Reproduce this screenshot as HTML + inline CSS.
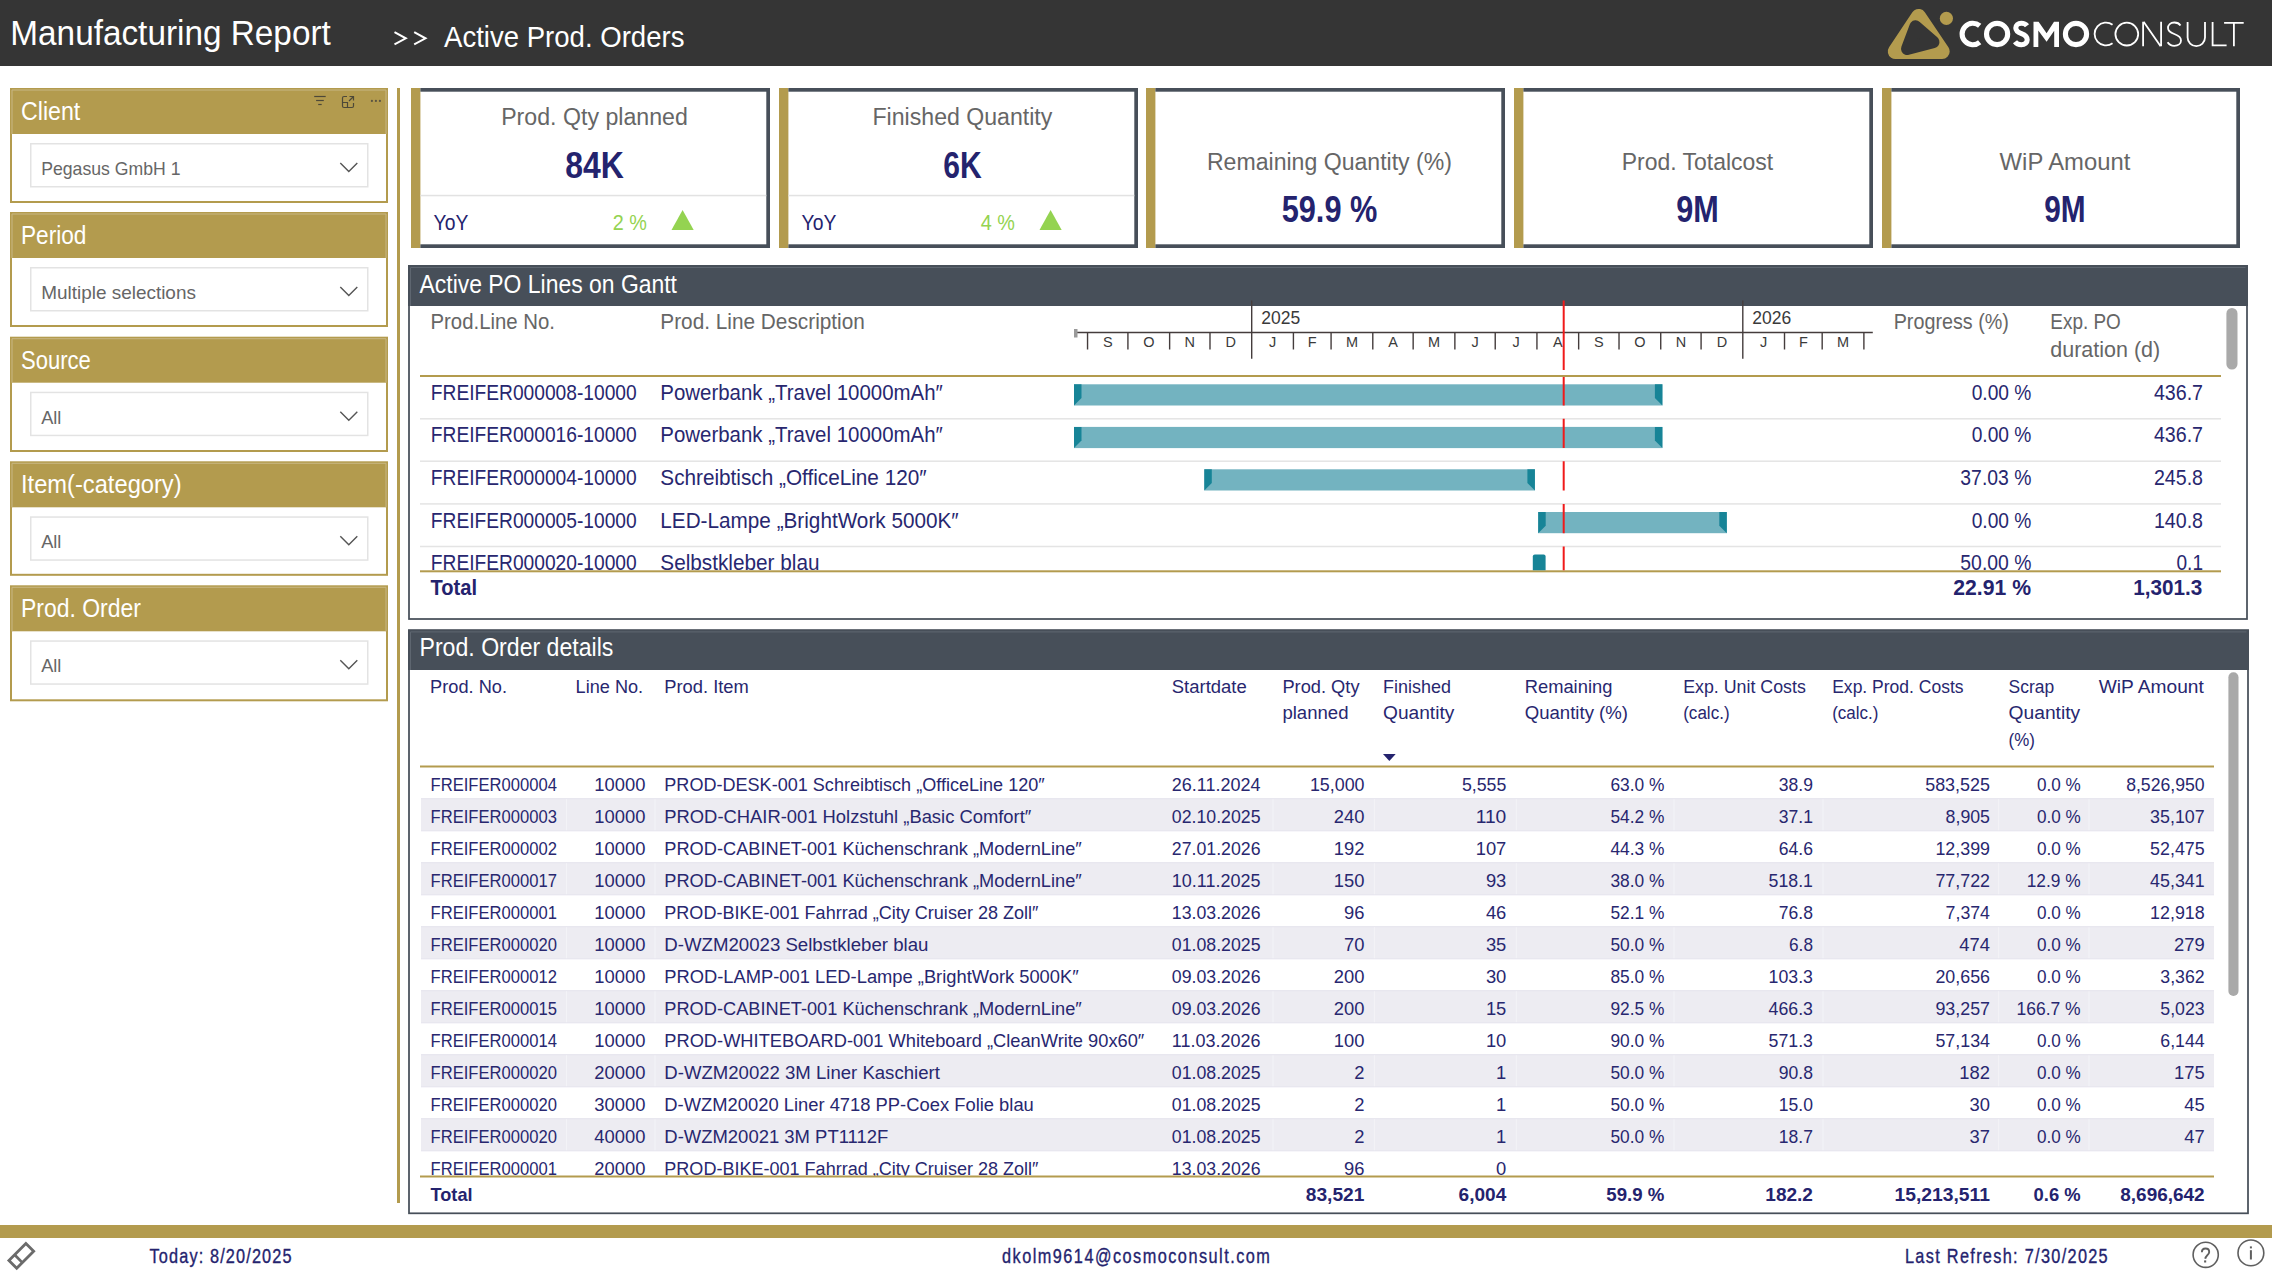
<!DOCTYPE html>
<html><head><meta charset="utf-8"><title>Manufacturing Report</title>
<style>html,body{margin:0;padding:0;background:#fff;overflow:hidden}svg{display:block}text{font-family:"Liberation Sans",sans-serif}</style></head>
<body><svg width="2272" height="1274" viewBox="0 0 2272 1274">
<rect width="2272" height="1274" fill="#FFFFFF"/>
<rect x="0" y="0" width="2272.00" height="66.00" fill="#353535" />
<text transform="translate(10.30,45.30) scale(0.9666,1)" font-size="34.49" font-weight="normal" fill="#FFFFFF" >Manufacturing Report</text>
<polyline points="394.5,32.2 405.8,38.3 394.5,44.4" fill="none" stroke="#FFFFFF" stroke-width="2"/>
<polyline points="414.2,32.2 425.5,38.3 414.2,44.4" fill="none" stroke="#FFFFFF" stroke-width="2"/>
<text transform="translate(444.00,47.30) scale(0.9188,1)" font-size="30.00" font-weight="normal" fill="#FFFFFF" >Active Prod. Orders</text>
<g>
<polygon points="1918.6,16.4 1895.3,51.4 1942.2,51.4" fill="#B39B4E" stroke="#B39B4E" stroke-width="15" stroke-linejoin="round"/>
<polygon points="1915.6,26.6 1907.3,48.8 1933.2,42" fill="#353535" stroke="#353535" stroke-width="12.5" stroke-linejoin="round"/>
<circle cx="1946.4" cy="18.4" r="6.6" fill="#B39B4E"/>
</g>
<g fill="none" stroke="#FFFFFF" stroke-width="5.1">
<path d="M1979.68,25.8 A10.7,10.7 0 1 0 1979.68,42.2"/>
<circle cx="1997.1" cy="34" r="10.6"/>
<path d="M2027,25.8 C2025.5,23.8 2023.5,23.3 2021.3,23.3 C2018,23.3 2015.8,25.3 2015.8,28 C2015.8,31.2 2018.5,32.5 2021.5,33.6 C2024.8,34.8 2027.2,36.5 2027.2,39.8 C2027.2,42.8 2024.8,44.8 2021.3,44.8 C2018.8,44.8 2016.5,43.8 2015,41.8"/>

<circle cx="2076" cy="34" r="10.6"/>
</g>
<polygon fill="#FFFFFF" points="2033.5,47 2033.5,21.8 2038.6,21.8 2046.6,33.2 2054,21.8 2059,21.8 2059,47 2054.2,47 2054.2,30.8 2046.6,41.8 2038.3,30.5 2038.3,47"/>
<g fill="none" stroke="#FFFFFF" stroke-width="1.8">
<path d="M2112.54,24.66 A11.4,11.4 0 1 0 2112.54,43.34"/>
<circle cx="2126.8" cy="34.1" r="11.4"/>
<path d="M2143.1,46.2 L2143.1,21.8 M2143.6,21.8 L2160.6,46.2 M2161.1,46.2 L2161.1,21.8" stroke-linejoin="bevel"/>
<path d="M2180.5,25.5 C2179,23 2176.5,22.5 2174.3,22.5 C2170.5,22.5 2168,24.8 2168,28 C2168,31.5 2171,32.8 2174.3,34 C2178,35.3 2181,37 2181,40.5 C2181,43.8 2178.2,45.8 2174.3,45.8 C2171.5,45.8 2169,44.5 2167.6,42.3"/>
<path d="M2187.6,22 L2187.6,37.5 A8.7,8.7 0 0 0 2205,37.5 L2205,22"/>
<polyline points="2212.6,22 2212.6,45.3 2226.6,45.3"/>
<path d="M2224.1,22.9 L2243.7,22.9 M2233.9,22.9 L2233.9,46.2"/>
</g>
<rect x="10" y="88" width="378.00" height="115.00" fill="#B39B4E" />
<rect x="12" y="134" width="374.00" height="67.00" fill="#FFFFFF" />
<path d="M12,134 L12,90 L386,90 L386,134" fill="none" stroke="#C8B783" stroke-width="1"/>
<text transform="translate(21.00,119.80) scale(0.9144,1)" font-size="25.36" font-weight="normal" fill="#FFFFFF" >Client</text>
<rect x="30.75" y="143.75" width="337" height="43" fill="#FFFFFF" stroke="#E3E3E3" stroke-width="1.5"/>
<text transform="translate(41.20,174.80) scale(0.9374,1)" font-size="18.84" font-weight="normal" fill="#666666" >Pegasus GmbH 1</text>
<polyline points="340.3,163 348.8,171.5 357.3,163" fill="none" stroke="#555555" stroke-width="1.4"/>
<rect x="10" y="212" width="378.00" height="115.00" fill="#B39B4E" />
<rect x="12" y="258" width="374.00" height="67.00" fill="#FFFFFF" />
<path d="M12,258 L12,214 L386,214 L386,258" fill="none" stroke="#C8B783" stroke-width="1"/>
<text transform="translate(21.00,243.80) scale(0.8933,1)" font-size="25.36" font-weight="normal" fill="#FFFFFF" >Period</text>
<rect x="30.75" y="267.75" width="337" height="43" fill="#FFFFFF" stroke="#E3E3E3" stroke-width="1.5"/>
<text transform="translate(41.20,298.80) scale(1.0063,1)" font-size="18.84" font-weight="normal" fill="#666666" >Multiple selections</text>
<polyline points="340.3,287 348.8,295.5 357.3,287" fill="none" stroke="#555555" stroke-width="1.4"/>
<rect x="10" y="336.7" width="378.00" height="115.30" fill="#B39B4E" />
<rect x="12" y="382.7" width="374.00" height="67.30" fill="#FFFFFF" />
<path d="M12,382.7 L12,338.7 L386,338.7 L386,382.7" fill="none" stroke="#C8B783" stroke-width="1"/>
<text transform="translate(21.00,368.50) scale(0.8687,1)" font-size="25.36" font-weight="normal" fill="#FFFFFF" >Source</text>
<rect x="30.75" y="392.45" width="337" height="43" fill="#FFFFFF" stroke="#E3E3E3" stroke-width="1.5"/>
<text transform="translate(41.20,423.50) scale(0.9650,1)" font-size="18.84" font-weight="normal" fill="#666666" >All</text>
<polyline points="340.3,411.7 348.8,420.2 357.3,411.7" fill="none" stroke="#555555" stroke-width="1.4"/>
<rect x="10" y="461.3" width="378.00" height="114.50" fill="#B39B4E" />
<rect x="12" y="507.3" width="374.00" height="66.50" fill="#FFFFFF" />
<path d="M12,507.3 L12,463.3 L386,463.3 L386,507.3" fill="none" stroke="#C8B783" stroke-width="1"/>
<text transform="translate(21.00,493.10) scale(0.9347,1)" font-size="25.36" font-weight="normal" fill="#FFFFFF" >Item(-category)</text>
<rect x="30.75" y="517.05" width="337" height="43" fill="#FFFFFF" stroke="#E3E3E3" stroke-width="1.5"/>
<text transform="translate(41.20,548.10) scale(0.9650,1)" font-size="18.84" font-weight="normal" fill="#666666" >All</text>
<polyline points="340.3,536.3 348.8,544.8 357.3,536.3" fill="none" stroke="#555555" stroke-width="1.4"/>
<rect x="10" y="585.3" width="378.00" height="116.00" fill="#B39B4E" />
<rect x="12" y="631.3" width="374.00" height="68.00" fill="#FFFFFF" />
<path d="M12,631.3 L12,587.3 L386,587.3 L386,631.3" fill="none" stroke="#C8B783" stroke-width="1"/>
<text transform="translate(21.00,617.10) scale(0.9057,1)" font-size="25.36" font-weight="normal" fill="#FFFFFF" >Prod. Order</text>
<rect x="30.75" y="641.05" width="337" height="43" fill="#FFFFFF" stroke="#E3E3E3" stroke-width="1.5"/>
<text transform="translate(41.20,672.10) scale(0.9650,1)" font-size="18.84" font-weight="normal" fill="#666666" >All</text>
<polyline points="340.3,660.3 348.8,668.8 357.3,660.3" fill="none" stroke="#555555" stroke-width="1.4"/>
<g stroke="#4d4838" stroke-width="1.2" fill="none"><line x1="314.2" y1="96.5" x2="325.7" y2="96.5"/><line x1="316.1" y1="100.5" x2="323.8" y2="100.5"/><line x1="318.2" y1="104.5" x2="321.7" y2="104.5"/><path d="M347,96.5 L344,96.5 Q342.5,96.5 342.5,98 L342.5,106 Q342.5,107.5 344,107.5 L352,107.5 Q353.5,107.5 353.5,106 L353.5,103"/><path d="M342.5,102.5 L347.5,102.5 L347.5,107.5"/><path d="M349.5,96.5 L353.5,96.5 L353.5,100.5 M353.5,96.5 L349,101"/></g><g fill="#5a5442"><circle cx="371.9" cy="100.9" r="1.1"/><circle cx="375.9" cy="100.9" r="1.1"/><circle cx="379.9" cy="100.9" r="1.1"/></g>
<rect x="397" y="88" width="3.00" height="1115.00" fill="#B39B4E" />
<rect x="411" y="88" width="9.40" height="160.00" fill="#B39B4E" />
<rect x="420.4" y="88" width="349.60" height="3.70" fill="#474F59" />
<rect x="766.3" y="88" width="3.70" height="160.00" fill="#474F59" />
<rect x="420.4" y="244.3" width="349.60" height="3.70" fill="#474F59" />
<text transform="translate(501.15,125.00) scale(0.9401,1)" font-size="24.64" font-weight="normal" fill="#666666" >Prod. Qty planned</text>
<text transform="translate(565.20,178.00) scale(0.8646,1)" font-size="36.96" font-weight="bold" fill="#24236E" >84K</text>
<rect x="420.4" y="194.8" width="345.90" height="1.50" fill="#E2E2E2" />
<text transform="translate(433.60,230.00) scale(0.8883,1)" font-size="21.74" font-weight="normal" fill="#24236E" >YoY</text>
<text transform="translate(612.84,230.00) scale(0.9120,1)" font-size="21.74" font-weight="normal" fill="#94D351" >2 %</text>
<polygon points="671.5,230 693.7,230 682.6,210" fill="#94D351"/>
<rect x="779" y="88" width="9.40" height="160.00" fill="#B39B4E" />
<rect x="788.4" y="88" width="349.60" height="3.70" fill="#474F59" />
<rect x="1134.3" y="88" width="3.70" height="160.00" fill="#474F59" />
<rect x="788.4" y="244.3" width="349.60" height="3.70" fill="#474F59" />
<text transform="translate(872.50,125.00) scale(0.9388,1)" font-size="24.64" font-weight="normal" fill="#666666" >Finished Quantity</text>
<text transform="translate(943.30,178.00) scale(0.8130,1)" font-size="36.96" font-weight="bold" fill="#24236E" >6K</text>
<rect x="788.4" y="194.8" width="345.90" height="1.50" fill="#E2E2E2" />
<text transform="translate(801.60,230.00) scale(0.8883,1)" font-size="21.74" font-weight="normal" fill="#24236E" >YoY</text>
<text transform="translate(980.84,230.00) scale(0.9120,1)" font-size="21.74" font-weight="normal" fill="#94D351" >4 %</text>
<polygon points="1039.5,230 1061.7,230 1050.6,210" fill="#94D351"/>
<rect x="1146" y="88" width="9.40" height="160.00" fill="#B39B4E" />
<rect x="1155.4" y="88" width="349.60" height="3.70" fill="#474F59" />
<rect x="1501.3" y="88" width="3.70" height="160.00" fill="#474F59" />
<rect x="1155.4" y="244.3" width="349.60" height="3.70" fill="#474F59" />
<text transform="translate(1206.95,170.30) scale(0.9483,1)" font-size="24.35" font-weight="normal" fill="#666666" >Remaining Quantity (%)</text>
<text transform="translate(1281.70,222.00) scale(0.8310,1)" font-size="36.96" font-weight="bold" fill="#24236E" >59.9 %</text>
<rect x="1514" y="88" width="9.40" height="160.00" fill="#B39B4E" />
<rect x="1523.4" y="88" width="349.60" height="3.70" fill="#474F59" />
<rect x="1869.3" y="88" width="3.70" height="160.00" fill="#474F59" />
<rect x="1523.4" y="244.3" width="349.60" height="3.70" fill="#474F59" />
<text transform="translate(1621.75,170.30) scale(0.9433,1)" font-size="24.35" font-weight="normal" fill="#666666" >Prod. Totalcost</text>
<text transform="translate(1676.25,222.00) scale(0.8279,1)" font-size="36.96" font-weight="bold" fill="#24236E" >9M</text>
<rect x="1882" y="88" width="9.40" height="160.00" fill="#B39B4E" />
<rect x="1891.4" y="88" width="348.60" height="3.70" fill="#474F59" />
<rect x="2236.3" y="88" width="3.70" height="160.00" fill="#474F59" />
<rect x="1891.4" y="244.3" width="348.60" height="3.70" fill="#474F59" />
<text transform="translate(1999.60,170.30) scale(0.9796,1)" font-size="24.35" font-weight="normal" fill="#666666" >WiP Amount</text>
<text transform="translate(2044.30,222.00) scale(0.8065,1)" font-size="36.96" font-weight="bold" fill="#24236E" >9M</text>
<rect x="409" y="266" width="1838" height="353" fill="#FFFFFF" stroke="#474F59" stroke-width="1.75"/>
<rect x="408" y="265" width="1840.00" height="41.00" fill="#474F59" />
<path d="M410.5,306 L410.5,267.5 L2245.5,267.5" fill="none" stroke="#5E6670" stroke-width="1"/>
<text transform="translate(419.50,292.60) scale(0.9046,1)" font-size="25.36" font-weight="normal" fill="#FFFFFF" >Active PO Lines on Gantt</text>
<text transform="translate(430.50,329.20) scale(0.9122,1)" font-size="22.32" font-weight="normal" fill="#666666" >Prod.Line No.</text>
<text transform="translate(660.30,329.20) scale(0.9318,1)" font-size="22.32" font-weight="normal" fill="#666666" >Prod. Line Description</text>
<text transform="translate(1893.70,328.70) scale(0.8846,1)" font-size="22.32" font-weight="normal" fill="#666666" >Progress (%)</text>
<text transform="translate(2050.30,328.70) scale(0.8482,1)" font-size="22.32" font-weight="normal" fill="#666666" >Exp. PO</text>
<text transform="translate(2050.30,356.60) scale(0.9637,1)" font-size="22.32" font-weight="normal" fill="#666666" >duration (d)</text>
<line x1="1075" y1="332.5" x2="1872.8" y2="332.5" stroke="#443C3C" stroke-width="1.4"/>
<rect x="1074" y="329" width="3.50" height="8.50" fill="#9A9A9A" />
<line x1="1087.55" y1="332.5" x2="1087.55" y2="349.5" stroke="#443C3C" stroke-width="1.4"/>
<text transform="translate(1102.90,346.80) scale(1.0000,1)" font-size="14.49" font-weight="normal" fill="#3A3A3A" >S</text>
<line x1="1127.92" y1="332.5" x2="1127.92" y2="349.5" stroke="#443C3C" stroke-width="1.4"/>
<text transform="translate(1143.13,346.80) scale(1.0000,1)" font-size="14.49" font-weight="normal" fill="#3A3A3A" >O</text>
<line x1="1169.63" y1="332.5" x2="1169.63" y2="349.5" stroke="#443C3C" stroke-width="1.4"/>
<text transform="translate(1184.58,346.80) scale(1.0000,1)" font-size="14.49" font-weight="normal" fill="#3A3A3A" >N</text>
<line x1="1209.99" y1="332.5" x2="1209.99" y2="349.5" stroke="#443C3C" stroke-width="1.4"/>
<text transform="translate(1225.61,346.80) scale(1.0000,1)" font-size="14.49" font-weight="normal" fill="#3A3A3A" >D</text>
<line x1="1251.70" y1="300.5" x2="1251.70" y2="358.8" stroke="#443C3C" stroke-width="1.4"/>
<text transform="translate(1261.20,324.00) scale(0.9303,1)" font-size="18.84" font-weight="normal" fill="#3A3A3A" >2025</text>
<text transform="translate(1268.93,346.80) scale(1.0000,1)" font-size="14.49" font-weight="normal" fill="#3A3A3A" >J</text>
<line x1="1293.41" y1="332.5" x2="1293.41" y2="349.5" stroke="#443C3C" stroke-width="1.4"/>
<text transform="translate(1307.82,346.80) scale(1.0000,1)" font-size="14.49" font-weight="normal" fill="#3A3A3A" >F</text>
<line x1="1331.08" y1="332.5" x2="1331.08" y2="349.5" stroke="#443C3C" stroke-width="1.4"/>
<text transform="translate(1345.90,346.80) scale(1.0000,1)" font-size="14.49" font-weight="normal" fill="#3A3A3A" >M</text>
<line x1="1372.79" y1="332.5" x2="1372.79" y2="349.5" stroke="#443C3C" stroke-width="1.4"/>
<text transform="translate(1388.14,346.80) scale(1.0000,1)" font-size="14.49" font-weight="normal" fill="#3A3A3A" >A</text>
<line x1="1413.16" y1="332.5" x2="1413.16" y2="349.5" stroke="#443C3C" stroke-width="1.4"/>
<text transform="translate(1427.98,346.80) scale(1.0000,1)" font-size="14.49" font-weight="normal" fill="#3A3A3A" >M</text>
<line x1="1454.87" y1="332.5" x2="1454.87" y2="349.5" stroke="#443C3C" stroke-width="1.4"/>
<text transform="translate(1471.43,346.80) scale(1.0000,1)" font-size="14.49" font-weight="normal" fill="#3A3A3A" >J</text>
<line x1="1495.23" y1="332.5" x2="1495.23" y2="349.5" stroke="#443C3C" stroke-width="1.4"/>
<text transform="translate(1512.46,346.80) scale(1.0000,1)" font-size="14.49" font-weight="normal" fill="#3A3A3A" >J</text>
<line x1="1536.94" y1="332.5" x2="1536.94" y2="349.5" stroke="#443C3C" stroke-width="1.4"/>
<text transform="translate(1552.96,346.80) scale(1.0000,1)" font-size="14.49" font-weight="normal" fill="#3A3A3A" >A</text>
<line x1="1578.65" y1="332.5" x2="1578.65" y2="349.5" stroke="#443C3C" stroke-width="1.4"/>
<text transform="translate(1594.00,346.80) scale(1.0000,1)" font-size="14.49" font-weight="normal" fill="#3A3A3A" >S</text>
<line x1="1619.02" y1="332.5" x2="1619.02" y2="349.5" stroke="#443C3C" stroke-width="1.4"/>
<text transform="translate(1634.23,346.80) scale(1.0000,1)" font-size="14.49" font-weight="normal" fill="#3A3A3A" >O</text>
<line x1="1660.73" y1="332.5" x2="1660.73" y2="349.5" stroke="#443C3C" stroke-width="1.4"/>
<text transform="translate(1675.68,346.80) scale(1.0000,1)" font-size="14.49" font-weight="normal" fill="#3A3A3A" >N</text>
<line x1="1701.09" y1="332.5" x2="1701.09" y2="349.5" stroke="#443C3C" stroke-width="1.4"/>
<text transform="translate(1716.71,346.80) scale(1.0000,1)" font-size="14.49" font-weight="normal" fill="#3A3A3A" >D</text>
<line x1="1742.80" y1="300.5" x2="1742.80" y2="358.8" stroke="#443C3C" stroke-width="1.4"/>
<text transform="translate(1752.30,324.00) scale(0.9303,1)" font-size="18.84" font-weight="normal" fill="#3A3A3A" >2026</text>
<text transform="translate(1760.03,346.80) scale(1.0000,1)" font-size="14.49" font-weight="normal" fill="#3A3A3A" >J</text>
<line x1="1784.51" y1="332.5" x2="1784.51" y2="349.5" stroke="#443C3C" stroke-width="1.4"/>
<text transform="translate(1798.92,346.80) scale(1.0000,1)" font-size="14.49" font-weight="normal" fill="#3A3A3A" >F</text>
<line x1="1822.18" y1="332.5" x2="1822.18" y2="349.5" stroke="#443C3C" stroke-width="1.4"/>
<text transform="translate(1837.00,346.80) scale(1.0000,1)" font-size="14.49" font-weight="normal" fill="#3A3A3A" >M</text>
<line x1="1863.89" y1="332.5" x2="1863.89" y2="349.5" stroke="#443C3C" stroke-width="1.4"/>
<line x1="1563.7" y1="300.5" x2="1563.7" y2="370" stroke="#F01A1A" stroke-width="2"/>
<rect x="420" y="375" width="1801.00" height="2.00" fill="#B39B4E" />
<rect x="420" y="418.05" width="1801.00" height="1.50" fill="#E4E4E4" />
<rect x="420" y="460.45" width="1801.00" height="1.50" fill="#E4E4E4" />
<rect x="420" y="503.15" width="1801.00" height="1.50" fill="#E4E4E4" />
<rect x="420" y="545.75" width="1801.00" height="1.50" fill="#E4E4E4" />
<rect x="420" y="570.3" width="1801.00" height="2.00" fill="#B39B4E" />
<clipPath id="gclip"><rect x="410" y="377" width="1820" height="193.3"/></clipPath><g clip-path="url(#gclip)">
<text transform="translate(430.80,399.60) scale(0.9078,1)" font-size="21.16" font-weight="normal" fill="#28276F" >FREIFER000008-10000</text>
<text transform="translate(660.30,399.60) scale(0.9658,1)" font-size="21.16" font-weight="normal" fill="#28276F" >Powerbank „Travel 10000mAh″</text>
<text transform="translate(1971.66,399.60) scale(0.9070,1)" font-size="21.16" font-weight="normal" fill="#28276F" >0.00 %</text>
<text transform="translate(2153.92,399.60) scale(0.9271,1)" font-size="21.16" font-weight="normal" fill="#28276F" >436.7</text>
<rect x="1074" y="384.3" width="588.40" height="21.20" fill="#73B3C0" />
<polygon points="1074,384.3 1081.5,384.3 1081.5,398.0 1074,405.5" fill="#178497"/>
<polygon points="1662.4,384.3 1654.9,384.3 1654.9,398.0 1662.4,405.5" fill="#178497"/>
<line x1="1563.7" y1="377" x2="1563.7" y2="405.5" stroke="#F01A1A" stroke-width="2"/>
<text transform="translate(430.80,442.25) scale(0.9078,1)" font-size="21.16" font-weight="normal" fill="#28276F" >FREIFER000016-10000</text>
<text transform="translate(660.30,442.25) scale(0.9658,1)" font-size="21.16" font-weight="normal" fill="#28276F" >Powerbank „Travel 10000mAh″</text>
<text transform="translate(1971.66,442.25) scale(0.9070,1)" font-size="21.16" font-weight="normal" fill="#28276F" >0.00 %</text>
<text transform="translate(2153.92,442.25) scale(0.9271,1)" font-size="21.16" font-weight="normal" fill="#28276F" >436.7</text>
<rect x="1074" y="426.90000000000003" width="588.40" height="21.20" fill="#73B3C0" />
<polygon points="1074,426.90000000000003 1081.5,426.90000000000003 1081.5,440.6 1074,448.1" fill="#178497"/>
<polygon points="1662.4,426.90000000000003 1654.9,426.90000000000003 1654.9,440.6 1662.4,448.1" fill="#178497"/>
<line x1="1563.7" y1="418.8" x2="1563.7" y2="448.1" stroke="#F01A1A" stroke-width="2"/>
<text transform="translate(430.80,484.90) scale(0.9078,1)" font-size="21.16" font-weight="normal" fill="#28276F" >FREIFER000004-10000</text>
<text transform="translate(660.30,484.90) scale(0.9808,1)" font-size="21.16" font-weight="normal" fill="#28276F" >Schreibtisch „OfficeLine 120″</text>
<text transform="translate(1960.36,484.90) scale(0.9150,1)" font-size="21.16" font-weight="normal" fill="#28276F" >37.03 %</text>
<text transform="translate(2153.92,484.90) scale(0.9271,1)" font-size="21.16" font-weight="normal" fill="#28276F" >245.8</text>
<rect x="1204.3" y="469.3" width="330.60" height="21.20" fill="#73B3C0" />
<polygon points="1204.3,469.3 1211.8,469.3 1211.8,483.0 1204.3,490.5" fill="#178497"/>
<polygon points="1534.9,469.3 1527.4,469.3 1527.4,483.0 1534.9,490.5" fill="#178497"/>
<line x1="1563.7" y1="461.2" x2="1563.7" y2="490.5" stroke="#F01A1A" stroke-width="2"/>
<text transform="translate(430.80,527.55) scale(0.9078,1)" font-size="21.16" font-weight="normal" fill="#28276F" >FREIFER000005-10000</text>
<text transform="translate(660.30,527.55) scale(0.9798,1)" font-size="21.16" font-weight="normal" fill="#28276F" >LED-Lampe „BrightWork 5000K″</text>
<text transform="translate(1971.66,527.55) scale(0.9070,1)" font-size="21.16" font-weight="normal" fill="#28276F" >0.00 %</text>
<text transform="translate(2153.92,527.55) scale(0.9271,1)" font-size="21.16" font-weight="normal" fill="#28276F" >140.8</text>
<rect x="1538.2" y="512.0" width="188.60" height="21.20" fill="#73B3C0" />
<polygon points="1538.2,512.0 1545.7,512.0 1545.7,525.7 1538.2,533.2" fill="#178497"/>
<polygon points="1726.8,512.0 1719.3,512.0 1719.3,525.7 1726.8,533.2" fill="#178497"/>
<line x1="1563.7" y1="503.9" x2="1563.7" y2="533.2" stroke="#F01A1A" stroke-width="2"/>
<text transform="translate(430.80,570.20) scale(0.9078,1)" font-size="21.16" font-weight="normal" fill="#28276F" >FREIFER000020-10000</text>
<text transform="translate(660.30,570.20) scale(0.9814,1)" font-size="21.16" font-weight="normal" fill="#28276F" >Selbstkleber blau</text>
<text transform="translate(1960.36,570.20) scale(0.9150,1)" font-size="21.16" font-weight="normal" fill="#28276F" >50.00 %</text>
<text transform="translate(2176.50,570.20) scale(0.9008,1)" font-size="21.16" font-weight="normal" fill="#28276F" >0.1</text>
<rect x="1532.8" y="554.6" width="12.799999999999955" height="21.200000000000045" rx="2" fill="#178497"/>
<line x1="1563.7" y1="546.5" x2="1563.7" y2="575.8000000000001" stroke="#F01A1A" stroke-width="2"/>
</g>
<text transform="translate(430.50,594.80) scale(0.9498,1)" font-size="21.16" font-weight="bold" fill="#24236E" >Total</text>
<text transform="translate(1953.30,594.80) scale(1.0009,1)" font-size="21.16" font-weight="bold" fill="#24236E" >22.91 %</text>
<text transform="translate(2133.20,594.80) scale(0.9789,1)" font-size="21.16" font-weight="bold" fill="#24236E" >1,301.3</text>
<rect x="2226.4" y="308" width="11.1" height="61.6" rx="5.5" fill="#A9A9A9"/>
<rect x="409" y="630.4" width="1839" height="582.9" fill="#FFFFFF" stroke="#474F59" stroke-width="1.75"/>
<rect x="408" y="629.4" width="1841.00" height="40.60" fill="#474F59" />
<path d="M410.5,670 L410.5,631.9 L2246.5,631.9" fill="none" stroke="#5E6670" stroke-width="1"/>
<text transform="translate(419.50,655.80) scale(0.9114,1)" font-size="25.36" font-weight="normal" fill="#FFFFFF" >Prod. Order details</text>
<text transform="translate(430.10,692.60) scale(0.9517,1)" font-size="19.13" font-weight="normal" fill="#28276F" >Prod. No.</text>
<text transform="translate(575.60,692.60) scale(0.9486,1)" font-size="19.13" font-weight="normal" fill="#28276F" >Line No.</text>
<text transform="translate(664.30,692.60) scale(0.9587,1)" font-size="19.13" font-weight="normal" fill="#28276F" >Prod. Item</text>
<text transform="translate(1171.80,692.60) scale(0.9661,1)" font-size="19.13" font-weight="normal" fill="#28276F" >Startdate</text>
<text transform="translate(1282.40,692.60) scale(0.9554,1)" font-size="19.13" font-weight="normal" fill="#28276F" >Prod. Qty</text>
<text transform="translate(1282.40,719.30) scale(0.9708,1)" font-size="19.13" font-weight="normal" fill="#28276F" >planned</text>
<text transform="translate(1383.10,692.60) scale(0.9376,1)" font-size="19.13" font-weight="normal" fill="#28276F" >Finished</text>
<text transform="translate(1383.10,719.30) scale(0.9994,1)" font-size="19.13" font-weight="normal" fill="#28276F" >Quantity</text>
<text transform="translate(1524.70,692.60) scale(0.9591,1)" font-size="19.13" font-weight="normal" fill="#28276F" >Remaining</text>
<text transform="translate(1524.70,719.30) scale(0.9726,1)" font-size="19.13" font-weight="normal" fill="#28276F" >Quantity (%)</text>
<text transform="translate(1683.20,692.60) scale(0.9308,1)" font-size="19.13" font-weight="normal" fill="#28276F" >Exp. Unit Costs</text>
<text transform="translate(1683.20,719.30) scale(0.8911,1)" font-size="19.13" font-weight="normal" fill="#28276F" >(calc.)</text>
<text transform="translate(1832.20,692.60) scale(0.9155,1)" font-size="19.13" font-weight="normal" fill="#28276F" >Exp. Prod. Costs</text>
<text transform="translate(1832.20,719.30) scale(0.8891,1)" font-size="19.13" font-weight="normal" fill="#28276F" >(calc.)</text>
<text transform="translate(2008.60,692.60) scale(0.9126,1)" font-size="19.13" font-weight="normal" fill="#28276F" >Scrap</text>
<text transform="translate(2008.60,719.30) scale(1.0050,1)" font-size="19.13" font-weight="normal" fill="#28276F" >Quantity</text>
<text transform="translate(2008.60,745.90) scale(0.8841,1)" font-size="19.13" font-weight="normal" fill="#28276F" >(%)</text>
<text transform="translate(2098.70,692.60) scale(1.0028,1)" font-size="19.13" font-weight="normal" fill="#28276F" >WiP Amount</text>
<polygon points="1383,753.9 1395.7,753.9 1389.35,760.9" fill="#24236E"/>
<rect x="420" y="765.5" width="1794.00" height="2.00" fill="#B39B4E" />
<clipPath id="oclip"><rect x="410" y="767.5" width="1810" height="408.5"/></clipPath><g clip-path="url(#oclip)">
<text transform="translate(430.50,791.10) scale(0.8679,1)" font-size="19.13" font-weight="normal" fill="#28276F" >FREIFER000004</text>
<text transform="translate(594.33,791.10) scale(0.9600,1)" font-size="19.13" font-weight="normal" fill="#28276F" >10000</text>
<text transform="translate(664.30,791.10) scale(0.9446,1)" font-size="19.13" font-weight="normal" fill="#28276F" >PROD-DESK-001 Schreibtisch „OfficeLine 120″</text>
<text transform="translate(1171.80,791.10) scale(0.9411,1)" font-size="19.13" font-weight="normal" fill="#28276F" >26.11.2024</text>
<text transform="translate(1309.89,791.10) scale(0.9331,1)" font-size="19.13" font-weight="normal" fill="#28276F" >15,000</text>
<text transform="translate(1461.92,791.10) scale(0.9271,1)" font-size="19.13" font-weight="normal" fill="#28276F" >5,555</text>
<text transform="translate(1610.39,791.10) scale(0.9070,1)" font-size="19.13" font-weight="normal" fill="#28276F" >63.0 %</text>
<text transform="translate(1778.83,791.10) scale(0.9177,1)" font-size="19.13" font-weight="normal" fill="#28276F" >38.9</text>
<text transform="translate(1925.18,791.10) scale(0.9372,1)" font-size="19.13" font-weight="normal" fill="#28276F" >583,525</text>
<text transform="translate(2036.90,791.10) scale(0.8955,1)" font-size="19.13" font-weight="normal" fill="#28276F" >0.0 %</text>
<text transform="translate(2126.14,791.10) scale(0.9230,1)" font-size="19.13" font-weight="normal" fill="#28276F" >8,526,950</text>
<rect x="421" y="798.2" width="1793.00" height="33.00" fill="#EDECF2" />
<rect x="421" y="798.2" width="1793.00" height="1.00" fill="#E6E5EE" />
<rect x="421" y="830.2" width="1793.00" height="1.00" fill="#E6E5EE" />
<rect x="566.0" y="799.2" width="1.00" height="31.00" fill="#F3F3F7" />
<rect x="654.5" y="799.2" width="1.00" height="31.00" fill="#F3F3F7" />
<rect x="1272.5" y="799.2" width="1.00" height="31.00" fill="#F3F3F7" />
<rect x="1373.9" y="799.2" width="1.00" height="31.00" fill="#F3F3F7" />
<rect x="1515.8" y="799.2" width="1.00" height="31.00" fill="#F3F3F7" />
<rect x="1673.5" y="799.2" width="1.00" height="31.00" fill="#F3F3F7" />
<rect x="1822.5" y="799.2" width="1.00" height="31.00" fill="#F3F3F7" />
<rect x="1998.1" y="799.2" width="1.00" height="31.00" fill="#F3F3F7" />
<rect x="2088.5" y="799.2" width="1.00" height="31.00" fill="#F3F3F7" />
<text transform="translate(430.50,823.10) scale(0.8679,1)" font-size="19.13" font-weight="normal" fill="#28276F" >FREIFER000003</text>
<text transform="translate(594.33,823.10) scale(0.9600,1)" font-size="19.13" font-weight="normal" fill="#28276F" >10000</text>
<text transform="translate(664.30,823.10) scale(0.9614,1)" font-size="19.13" font-weight="normal" fill="#28276F" >PROD-CHAIR-001 Holzstuhl „Basic Comfort″</text>
<text transform="translate(1171.80,823.10) scale(0.9271,1)" font-size="19.13" font-weight="normal" fill="#28276F" >02.10.2025</text>
<text transform="translate(1333.87,823.10) scale(0.9600,1)" font-size="19.13" font-weight="normal" fill="#28276F" >240</text>
<text transform="translate(1475.66,823.10) scale(1.0047,1)" font-size="19.13" font-weight="normal" fill="#28276F" >110</text>
<text transform="translate(1610.39,823.10) scale(0.9070,1)" font-size="19.13" font-weight="normal" fill="#28276F" >54.2 %</text>
<text transform="translate(1778.83,823.10) scale(0.9177,1)" font-size="19.13" font-weight="normal" fill="#28276F" >37.1</text>
<text transform="translate(1945.62,823.10) scale(0.9271,1)" font-size="19.13" font-weight="normal" fill="#28276F" >8,905</text>
<text transform="translate(2036.90,823.10) scale(0.8955,1)" font-size="19.13" font-weight="normal" fill="#28276F" >0.0 %</text>
<text transform="translate(2150.09,823.10) scale(0.9331,1)" font-size="19.13" font-weight="normal" fill="#28276F" >35,107</text>
<text transform="translate(430.50,855.10) scale(0.8679,1)" font-size="19.13" font-weight="normal" fill="#28276F" >FREIFER000002</text>
<text transform="translate(594.33,855.10) scale(0.9600,1)" font-size="19.13" font-weight="normal" fill="#28276F" >10000</text>
<text transform="translate(664.30,855.10) scale(0.9526,1)" font-size="19.13" font-weight="normal" fill="#28276F" >PROD-CABINET-001 Küchenschrank „ModernLine″</text>
<text transform="translate(1171.80,855.10) scale(0.9271,1)" font-size="19.13" font-weight="normal" fill="#28276F" >27.01.2026</text>
<text transform="translate(1333.87,855.10) scale(0.9600,1)" font-size="19.13" font-weight="normal" fill="#28276F" >192</text>
<text transform="translate(1475.67,855.10) scale(0.9600,1)" font-size="19.13" font-weight="normal" fill="#28276F" >107</text>
<text transform="translate(1610.39,855.10) scale(0.9070,1)" font-size="19.13" font-weight="normal" fill="#28276F" >44.3 %</text>
<text transform="translate(1778.83,855.10) scale(0.9177,1)" font-size="19.13" font-weight="normal" fill="#28276F" >64.6</text>
<text transform="translate(1935.39,855.10) scale(0.9331,1)" font-size="19.13" font-weight="normal" fill="#28276F" >12,399</text>
<text transform="translate(2036.90,855.10) scale(0.8955,1)" font-size="19.13" font-weight="normal" fill="#28276F" >0.0 %</text>
<text transform="translate(2150.09,855.10) scale(0.9331,1)" font-size="19.13" font-weight="normal" fill="#28276F" >52,475</text>
<rect x="421" y="862.2" width="1793.00" height="33.00" fill="#EDECF2" />
<rect x="421" y="862.2" width="1793.00" height="1.00" fill="#E6E5EE" />
<rect x="421" y="894.2" width="1793.00" height="1.00" fill="#E6E5EE" />
<rect x="566.0" y="863.2" width="1.00" height="31.00" fill="#F3F3F7" />
<rect x="654.5" y="863.2" width="1.00" height="31.00" fill="#F3F3F7" />
<rect x="1272.5" y="863.2" width="1.00" height="31.00" fill="#F3F3F7" />
<rect x="1373.9" y="863.2" width="1.00" height="31.00" fill="#F3F3F7" />
<rect x="1515.8" y="863.2" width="1.00" height="31.00" fill="#F3F3F7" />
<rect x="1673.5" y="863.2" width="1.00" height="31.00" fill="#F3F3F7" />
<rect x="1822.5" y="863.2" width="1.00" height="31.00" fill="#F3F3F7" />
<rect x="1998.1" y="863.2" width="1.00" height="31.00" fill="#F3F3F7" />
<rect x="2088.5" y="863.2" width="1.00" height="31.00" fill="#F3F3F7" />
<text transform="translate(430.50,887.10) scale(0.8679,1)" font-size="19.13" font-weight="normal" fill="#28276F" >FREIFER000017</text>
<text transform="translate(594.33,887.10) scale(0.9600,1)" font-size="19.13" font-weight="normal" fill="#28276F" >10000</text>
<text transform="translate(664.30,887.10) scale(0.9526,1)" font-size="19.13" font-weight="normal" fill="#28276F" >PROD-CABINET-001 Küchenschrank „ModernLine″</text>
<text transform="translate(1171.80,887.10) scale(0.9411,1)" font-size="19.13" font-weight="normal" fill="#28276F" >10.11.2025</text>
<text transform="translate(1333.87,887.10) scale(0.9600,1)" font-size="19.13" font-weight="normal" fill="#28276F" >150</text>
<text transform="translate(1485.88,887.10) scale(0.9600,1)" font-size="19.13" font-weight="normal" fill="#28276F" >93</text>
<text transform="translate(1610.39,887.10) scale(0.9070,1)" font-size="19.13" font-weight="normal" fill="#28276F" >38.0 %</text>
<text transform="translate(1768.62,887.10) scale(0.9271,1)" font-size="19.13" font-weight="normal" fill="#28276F" >518.1</text>
<text transform="translate(1935.39,887.10) scale(0.9331,1)" font-size="19.13" font-weight="normal" fill="#28276F" >77,722</text>
<text transform="translate(2026.69,887.10) scale(0.9070,1)" font-size="19.13" font-weight="normal" fill="#28276F" >12.9 %</text>
<text transform="translate(2150.09,887.10) scale(0.9331,1)" font-size="19.13" font-weight="normal" fill="#28276F" >45,341</text>
<text transform="translate(430.50,919.10) scale(0.8679,1)" font-size="19.13" font-weight="normal" fill="#28276F" >FREIFER000001</text>
<text transform="translate(594.33,919.10) scale(0.9600,1)" font-size="19.13" font-weight="normal" fill="#28276F" >10000</text>
<text transform="translate(664.30,919.10) scale(0.9437,1)" font-size="19.13" font-weight="normal" fill="#28276F" >PROD-BIKE-001 Fahrrad „City Cruiser 28 Zoll″</text>
<text transform="translate(1171.80,919.10) scale(0.9271,1)" font-size="19.13" font-weight="normal" fill="#28276F" >13.03.2026</text>
<text transform="translate(1344.08,919.10) scale(0.9600,1)" font-size="19.13" font-weight="normal" fill="#28276F" >96</text>
<text transform="translate(1485.88,919.10) scale(0.9600,1)" font-size="19.13" font-weight="normal" fill="#28276F" >46</text>
<text transform="translate(1610.39,919.10) scale(0.9070,1)" font-size="19.13" font-weight="normal" fill="#28276F" >52.1 %</text>
<text transform="translate(1778.83,919.10) scale(0.9177,1)" font-size="19.13" font-weight="normal" fill="#28276F" >76.8</text>
<text transform="translate(1945.62,919.10) scale(0.9271,1)" font-size="19.13" font-weight="normal" fill="#28276F" >7,374</text>
<text transform="translate(2036.90,919.10) scale(0.8955,1)" font-size="19.13" font-weight="normal" fill="#28276F" >0.0 %</text>
<text transform="translate(2150.09,919.10) scale(0.9331,1)" font-size="19.13" font-weight="normal" fill="#28276F" >12,918</text>
<rect x="421" y="926.2" width="1793.00" height="33.00" fill="#EDECF2" />
<rect x="421" y="926.2" width="1793.00" height="1.00" fill="#E6E5EE" />
<rect x="421" y="958.2" width="1793.00" height="1.00" fill="#E6E5EE" />
<rect x="566.0" y="927.2" width="1.00" height="31.00" fill="#F3F3F7" />
<rect x="654.5" y="927.2" width="1.00" height="31.00" fill="#F3F3F7" />
<rect x="1272.5" y="927.2" width="1.00" height="31.00" fill="#F3F3F7" />
<rect x="1373.9" y="927.2" width="1.00" height="31.00" fill="#F3F3F7" />
<rect x="1515.8" y="927.2" width="1.00" height="31.00" fill="#F3F3F7" />
<rect x="1673.5" y="927.2" width="1.00" height="31.00" fill="#F3F3F7" />
<rect x="1822.5" y="927.2" width="1.00" height="31.00" fill="#F3F3F7" />
<rect x="1998.1" y="927.2" width="1.00" height="31.00" fill="#F3F3F7" />
<rect x="2088.5" y="927.2" width="1.00" height="31.00" fill="#F3F3F7" />
<text transform="translate(430.50,951.10) scale(0.8679,1)" font-size="19.13" font-weight="normal" fill="#28276F" >FREIFER000020</text>
<text transform="translate(594.33,951.10) scale(0.9600,1)" font-size="19.13" font-weight="normal" fill="#28276F" >10000</text>
<text transform="translate(664.30,951.10) scale(0.9748,1)" font-size="19.13" font-weight="normal" fill="#28276F" >D-WZM20023 Selbstkleber blau</text>
<text transform="translate(1171.80,951.10) scale(0.9271,1)" font-size="19.13" font-weight="normal" fill="#28276F" >01.08.2025</text>
<text transform="translate(1344.08,951.10) scale(0.9600,1)" font-size="19.13" font-weight="normal" fill="#28276F" >70</text>
<text transform="translate(1485.88,951.10) scale(0.9600,1)" font-size="19.13" font-weight="normal" fill="#28276F" >35</text>
<text transform="translate(1610.39,951.10) scale(0.9070,1)" font-size="19.13" font-weight="normal" fill="#28276F" >50.0 %</text>
<text transform="translate(1789.05,951.10) scale(0.9008,1)" font-size="19.13" font-weight="normal" fill="#28276F" >6.8</text>
<text transform="translate(1959.37,951.10) scale(0.9600,1)" font-size="19.13" font-weight="normal" fill="#28276F" >474</text>
<text transform="translate(2036.90,951.10) scale(0.8955,1)" font-size="19.13" font-weight="normal" fill="#28276F" >0.0 %</text>
<text transform="translate(2174.07,951.10) scale(0.9600,1)" font-size="19.13" font-weight="normal" fill="#28276F" >279</text>
<text transform="translate(430.50,983.10) scale(0.8679,1)" font-size="19.13" font-weight="normal" fill="#28276F" >FREIFER000012</text>
<text transform="translate(594.33,983.10) scale(0.9600,1)" font-size="19.13" font-weight="normal" fill="#28276F" >10000</text>
<text transform="translate(664.30,983.10) scale(0.9585,1)" font-size="19.13" font-weight="normal" fill="#28276F" >PROD-LAMP-001 LED-Lampe „BrightWork 5000K″</text>
<text transform="translate(1171.80,983.10) scale(0.9271,1)" font-size="19.13" font-weight="normal" fill="#28276F" >09.03.2026</text>
<text transform="translate(1333.87,983.10) scale(0.9600,1)" font-size="19.13" font-weight="normal" fill="#28276F" >200</text>
<text transform="translate(1485.88,983.10) scale(0.9600,1)" font-size="19.13" font-weight="normal" fill="#28276F" >30</text>
<text transform="translate(1610.39,983.10) scale(0.9070,1)" font-size="19.13" font-weight="normal" fill="#28276F" >85.0 %</text>
<text transform="translate(1768.62,983.10) scale(0.9271,1)" font-size="19.13" font-weight="normal" fill="#28276F" >103.3</text>
<text transform="translate(1935.39,983.10) scale(0.9331,1)" font-size="19.13" font-weight="normal" fill="#28276F" >20,656</text>
<text transform="translate(2036.90,983.10) scale(0.8955,1)" font-size="19.13" font-weight="normal" fill="#28276F" >0.0 %</text>
<text transform="translate(2160.32,983.10) scale(0.9271,1)" font-size="19.13" font-weight="normal" fill="#28276F" >3,362</text>
<rect x="421" y="990.2" width="1793.00" height="33.00" fill="#EDECF2" />
<rect x="421" y="990.2" width="1793.00" height="1.00" fill="#E6E5EE" />
<rect x="421" y="1022.2" width="1793.00" height="1.00" fill="#E6E5EE" />
<rect x="566.0" y="991.2" width="1.00" height="31.00" fill="#F3F3F7" />
<rect x="654.5" y="991.2" width="1.00" height="31.00" fill="#F3F3F7" />
<rect x="1272.5" y="991.2" width="1.00" height="31.00" fill="#F3F3F7" />
<rect x="1373.9" y="991.2" width="1.00" height="31.00" fill="#F3F3F7" />
<rect x="1515.8" y="991.2" width="1.00" height="31.00" fill="#F3F3F7" />
<rect x="1673.5" y="991.2" width="1.00" height="31.00" fill="#F3F3F7" />
<rect x="1822.5" y="991.2" width="1.00" height="31.00" fill="#F3F3F7" />
<rect x="1998.1" y="991.2" width="1.00" height="31.00" fill="#F3F3F7" />
<rect x="2088.5" y="991.2" width="1.00" height="31.00" fill="#F3F3F7" />
<text transform="translate(430.50,1015.10) scale(0.8679,1)" font-size="19.13" font-weight="normal" fill="#28276F" >FREIFER000015</text>
<text transform="translate(594.33,1015.10) scale(0.9600,1)" font-size="19.13" font-weight="normal" fill="#28276F" >10000</text>
<text transform="translate(664.30,1015.10) scale(0.9526,1)" font-size="19.13" font-weight="normal" fill="#28276F" >PROD-CABINET-001 Küchenschrank „ModernLine″</text>
<text transform="translate(1171.80,1015.10) scale(0.9271,1)" font-size="19.13" font-weight="normal" fill="#28276F" >09.03.2026</text>
<text transform="translate(1333.87,1015.10) scale(0.9600,1)" font-size="19.13" font-weight="normal" fill="#28276F" >200</text>
<text transform="translate(1485.88,1015.10) scale(0.9600,1)" font-size="19.13" font-weight="normal" fill="#28276F" >15</text>
<text transform="translate(1610.39,1015.10) scale(0.9070,1)" font-size="19.13" font-weight="normal" fill="#28276F" >92.5 %</text>
<text transform="translate(1768.62,1015.10) scale(0.9271,1)" font-size="19.13" font-weight="normal" fill="#28276F" >466.3</text>
<text transform="translate(1935.39,1015.10) scale(0.9331,1)" font-size="19.13" font-weight="normal" fill="#28276F" >93,257</text>
<text transform="translate(2016.47,1015.10) scale(0.9150,1)" font-size="19.13" font-weight="normal" fill="#28276F" >166.7 %</text>
<text transform="translate(2160.32,1015.10) scale(0.9271,1)" font-size="19.13" font-weight="normal" fill="#28276F" >5,023</text>
<text transform="translate(430.50,1047.10) scale(0.8679,1)" font-size="19.13" font-weight="normal" fill="#28276F" >FREIFER000014</text>
<text transform="translate(594.33,1047.10) scale(0.9600,1)" font-size="19.13" font-weight="normal" fill="#28276F" >10000</text>
<text transform="translate(664.30,1047.10) scale(0.9557,1)" font-size="19.13" font-weight="normal" fill="#28276F" >PROD-WHITEBOARD-001 Whiteboard „CleanWrite 90x60″</text>
<text transform="translate(1171.80,1047.10) scale(0.9411,1)" font-size="19.13" font-weight="normal" fill="#28276F" >11.03.2026</text>
<text transform="translate(1333.87,1047.10) scale(0.9600,1)" font-size="19.13" font-weight="normal" fill="#28276F" >100</text>
<text transform="translate(1485.88,1047.10) scale(0.9600,1)" font-size="19.13" font-weight="normal" fill="#28276F" >10</text>
<text transform="translate(1610.39,1047.10) scale(0.9070,1)" font-size="19.13" font-weight="normal" fill="#28276F" >90.0 %</text>
<text transform="translate(1768.62,1047.10) scale(0.9271,1)" font-size="19.13" font-weight="normal" fill="#28276F" >571.3</text>
<text transform="translate(1935.39,1047.10) scale(0.9331,1)" font-size="19.13" font-weight="normal" fill="#28276F" >57,134</text>
<text transform="translate(2036.90,1047.10) scale(0.8955,1)" font-size="19.13" font-weight="normal" fill="#28276F" >0.0 %</text>
<text transform="translate(2160.32,1047.10) scale(0.9271,1)" font-size="19.13" font-weight="normal" fill="#28276F" >6,144</text>
<rect x="421" y="1054.2" width="1793.00" height="33.00" fill="#EDECF2" />
<rect x="421" y="1054.2" width="1793.00" height="1.00" fill="#E6E5EE" />
<rect x="421" y="1086.2" width="1793.00" height="1.00" fill="#E6E5EE" />
<rect x="566.0" y="1055.2" width="1.00" height="31.00" fill="#F3F3F7" />
<rect x="654.5" y="1055.2" width="1.00" height="31.00" fill="#F3F3F7" />
<rect x="1272.5" y="1055.2" width="1.00" height="31.00" fill="#F3F3F7" />
<rect x="1373.9" y="1055.2" width="1.00" height="31.00" fill="#F3F3F7" />
<rect x="1515.8" y="1055.2" width="1.00" height="31.00" fill="#F3F3F7" />
<rect x="1673.5" y="1055.2" width="1.00" height="31.00" fill="#F3F3F7" />
<rect x="1822.5" y="1055.2" width="1.00" height="31.00" fill="#F3F3F7" />
<rect x="1998.1" y="1055.2" width="1.00" height="31.00" fill="#F3F3F7" />
<rect x="2088.5" y="1055.2" width="1.00" height="31.00" fill="#F3F3F7" />
<text transform="translate(430.50,1079.10) scale(0.8679,1)" font-size="19.13" font-weight="normal" fill="#28276F" >FREIFER000020</text>
<text transform="translate(594.33,1079.10) scale(0.9600,1)" font-size="19.13" font-weight="normal" fill="#28276F" >20000</text>
<text transform="translate(664.30,1079.10) scale(0.9713,1)" font-size="19.13" font-weight="normal" fill="#28276F" >D-WZM20022 3M Liner Kaschiert</text>
<text transform="translate(1171.80,1079.10) scale(0.9271,1)" font-size="19.13" font-weight="normal" fill="#28276F" >01.08.2025</text>
<text transform="translate(1354.29,1079.10) scale(0.9600,1)" font-size="19.13" font-weight="normal" fill="#28276F" >2</text>
<text transform="translate(1496.09,1079.10) scale(0.9600,1)" font-size="19.13" font-weight="normal" fill="#28276F" >1</text>
<text transform="translate(1610.39,1079.10) scale(0.9070,1)" font-size="19.13" font-weight="normal" fill="#28276F" >50.0 %</text>
<text transform="translate(1778.83,1079.10) scale(0.9177,1)" font-size="19.13" font-weight="normal" fill="#28276F" >90.8</text>
<text transform="translate(1959.37,1079.10) scale(0.9600,1)" font-size="19.13" font-weight="normal" fill="#28276F" >182</text>
<text transform="translate(2036.90,1079.10) scale(0.8955,1)" font-size="19.13" font-weight="normal" fill="#28276F" >0.0 %</text>
<text transform="translate(2174.07,1079.10) scale(0.9600,1)" font-size="19.13" font-weight="normal" fill="#28276F" >175</text>
<text transform="translate(430.50,1111.10) scale(0.8679,1)" font-size="19.13" font-weight="normal" fill="#28276F" >FREIFER000020</text>
<text transform="translate(594.33,1111.10) scale(0.9600,1)" font-size="19.13" font-weight="normal" fill="#28276F" >30000</text>
<text transform="translate(664.30,1111.10) scale(0.9602,1)" font-size="19.13" font-weight="normal" fill="#28276F" >D-WZM20020 Liner 4718 PP-Coex Folie blau</text>
<text transform="translate(1171.80,1111.10) scale(0.9271,1)" font-size="19.13" font-weight="normal" fill="#28276F" >01.08.2025</text>
<text transform="translate(1354.29,1111.10) scale(0.9600,1)" font-size="19.13" font-weight="normal" fill="#28276F" >2</text>
<text transform="translate(1496.09,1111.10) scale(0.9600,1)" font-size="19.13" font-weight="normal" fill="#28276F" >1</text>
<text transform="translate(1610.39,1111.10) scale(0.9070,1)" font-size="19.13" font-weight="normal" fill="#28276F" >50.0 %</text>
<text transform="translate(1778.83,1111.10) scale(0.9177,1)" font-size="19.13" font-weight="normal" fill="#28276F" >15.0</text>
<text transform="translate(1969.58,1111.10) scale(0.9600,1)" font-size="19.13" font-weight="normal" fill="#28276F" >30</text>
<text transform="translate(2036.90,1111.10) scale(0.8955,1)" font-size="19.13" font-weight="normal" fill="#28276F" >0.0 %</text>
<text transform="translate(2184.28,1111.10) scale(0.9600,1)" font-size="19.13" font-weight="normal" fill="#28276F" >45</text>
<rect x="421" y="1118.2" width="1793.00" height="33.00" fill="#EDECF2" />
<rect x="421" y="1118.2" width="1793.00" height="1.00" fill="#E6E5EE" />
<rect x="421" y="1150.2" width="1793.00" height="1.00" fill="#E6E5EE" />
<rect x="566.0" y="1119.2" width="1.00" height="31.00" fill="#F3F3F7" />
<rect x="654.5" y="1119.2" width="1.00" height="31.00" fill="#F3F3F7" />
<rect x="1272.5" y="1119.2" width="1.00" height="31.00" fill="#F3F3F7" />
<rect x="1373.9" y="1119.2" width="1.00" height="31.00" fill="#F3F3F7" />
<rect x="1515.8" y="1119.2" width="1.00" height="31.00" fill="#F3F3F7" />
<rect x="1673.5" y="1119.2" width="1.00" height="31.00" fill="#F3F3F7" />
<rect x="1822.5" y="1119.2" width="1.00" height="31.00" fill="#F3F3F7" />
<rect x="1998.1" y="1119.2" width="1.00" height="31.00" fill="#F3F3F7" />
<rect x="2088.5" y="1119.2" width="1.00" height="31.00" fill="#F3F3F7" />
<text transform="translate(430.50,1143.10) scale(0.8679,1)" font-size="19.13" font-weight="normal" fill="#28276F" >FREIFER000020</text>
<text transform="translate(594.33,1143.10) scale(0.9600,1)" font-size="19.13" font-weight="normal" fill="#28276F" >40000</text>
<text transform="translate(664.30,1143.10) scale(0.9651,1)" font-size="19.13" font-weight="normal" fill="#28276F" >D-WZM20021 3M PT1112F</text>
<text transform="translate(1171.80,1143.10) scale(0.9271,1)" font-size="19.13" font-weight="normal" fill="#28276F" >01.08.2025</text>
<text transform="translate(1354.29,1143.10) scale(0.9600,1)" font-size="19.13" font-weight="normal" fill="#28276F" >2</text>
<text transform="translate(1496.09,1143.10) scale(0.9600,1)" font-size="19.13" font-weight="normal" fill="#28276F" >1</text>
<text transform="translate(1610.39,1143.10) scale(0.9070,1)" font-size="19.13" font-weight="normal" fill="#28276F" >50.0 %</text>
<text transform="translate(1778.83,1143.10) scale(0.9177,1)" font-size="19.13" font-weight="normal" fill="#28276F" >18.7</text>
<text transform="translate(1969.58,1143.10) scale(0.9600,1)" font-size="19.13" font-weight="normal" fill="#28276F" >37</text>
<text transform="translate(2036.90,1143.10) scale(0.8955,1)" font-size="19.13" font-weight="normal" fill="#28276F" >0.0 %</text>
<text transform="translate(2184.28,1143.10) scale(0.9600,1)" font-size="19.13" font-weight="normal" fill="#28276F" >47</text>
<text transform="translate(430.50,1175.10) scale(0.8679,1)" font-size="19.13" font-weight="normal" fill="#28276F" >FREIFER000001</text>
<text transform="translate(594.33,1175.10) scale(0.9600,1)" font-size="19.13" font-weight="normal" fill="#28276F" >20000</text>
<text transform="translate(664.30,1175.10) scale(0.9437,1)" font-size="19.13" font-weight="normal" fill="#28276F" >PROD-BIKE-001 Fahrrad „City Cruiser 28 Zoll″</text>
<text transform="translate(1171.80,1175.10) scale(0.9271,1)" font-size="19.13" font-weight="normal" fill="#28276F" >13.03.2026</text>
<text transform="translate(1344.08,1175.10) scale(0.9600,1)" font-size="19.13" font-weight="normal" fill="#28276F" >96</text>
<text transform="translate(1496.09,1175.10) scale(0.9600,1)" font-size="19.13" font-weight="normal" fill="#28276F" >0</text>
</g>
<rect x="420" y="1175.5" width="1794.00" height="2.00" fill="#B39B4E" />
<text transform="translate(430.50,1201.00) scale(0.9498,1)" font-size="19.13" font-weight="bold" fill="#24236E" >Total</text>
<text transform="translate(1305.80,1201.00) scale(1.0031,1)" font-size="19.13" font-weight="bold" fill="#24236E" >83,521</text>
<text transform="translate(1458.59,1201.00) scale(0.9967,1)" font-size="19.13" font-weight="bold" fill="#24236E" >6,004</text>
<text transform="translate(1606.33,1201.00) scale(0.9750,1)" font-size="19.13" font-weight="bold" fill="#24236E" >59.9 %</text>
<text transform="translate(1765.29,1201.00) scale(0.9967,1)" font-size="19.13" font-weight="bold" fill="#24236E" >182.2</text>
<text transform="translate(1894.57,1201.00) scale(1.0078,1)" font-size="19.13" font-weight="bold" fill="#24236E" >15,213,511</text>
<text transform="translate(2033.61,1201.00) scale(0.9626,1)" font-size="19.13" font-weight="bold" fill="#24236E" >0.6 %</text>
<text transform="translate(2120.25,1201.00) scale(0.9923,1)" font-size="19.13" font-weight="bold" fill="#24236E" >8,696,642</text>
<rect x="2228.4" y="672.3" width="10.1" height="323.7" rx="5" fill="#A9A9A9"/>
<rect x="0" y="1225" width="2272.00" height="13.00" fill="#B39B4E" />
<g transform="translate(21.3,1255.9) rotate(-45)" fill="none" stroke="#6b6b6b" stroke-width="2.8"><rect x="-12" y="-5.5" width="24" height="11"/><line x1="-4" y1="-5.5" x2="-4" y2="5.5"/></g>
<text transform="translate(149.60,1263.00) scale(0.8400,1)" font-size="19.42" font-weight="normal" fill="#24236E" letter-spacing="1.336" stroke="#24236E" stroke-width="0.35">Today: 8/20/2025</text>
<text transform="translate(1002.00,1262.60) scale(0.8400,1)" font-size="19.42" font-weight="normal" fill="#24236E" letter-spacing="1.741" stroke="#24236E" stroke-width="0.35">dkolm9614@cosmoconsult.com</text>
<text transform="translate(1905.00,1262.80) scale(0.8400,1)" font-size="19.42" font-weight="normal" fill="#24236E" letter-spacing="1.552" stroke="#24236E" stroke-width="0.35">Last Refresh: 7/30/2025</text>
<g fill="none" stroke="#5f5f5f" stroke-width="1.6"><circle cx="2205.7" cy="1254.8" r="12.6"/><circle cx="2250.9" cy="1252.9" r="12.9"/></g>
<path d="M2201.9,1252.2 C2201.9,1249.9 2203.5,1248.5 2205.5,1248.5 C2207.7,1248.5 2209.2,1250 2209.2,1251.9 C2209.2,1254.5 2206,1255.6 2205.2,1258.7" fill="none" stroke="#5f5f5f" stroke-width="1.9"/>
<rect x="2204.1" y="1260.4" width="2.1" height="2.1" fill="#5f5f5f"/>
<rect x="2249.9" y="1250.2" width="2" height="9.3" fill="#5f5f5f"/><rect x="2249.9" y="1246.4" width="2" height="2" fill="#5f5f5f"/>
</svg></body></html>
